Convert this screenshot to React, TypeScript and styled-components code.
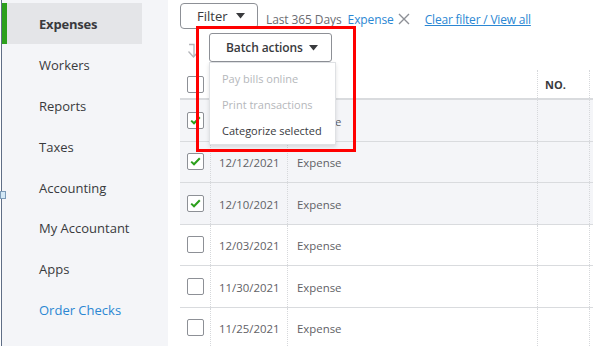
import React from 'react';
import styled, { createGlobalStyle } from 'styled-components';

const GlobalStyle = createGlobalStyle`
  html, body { margin: 0; padding: 0; background: #fff; }
  body { font-family: "Open Sans", "Liberation Sans", sans-serif; color: #393a3d; }
  * { box-sizing: border-box; }
`;

const Page = styled.div`
  position: relative;
  display: flex;
  width: 593px;
  height: 346px;
  overflow: hidden;
  background: #fff;
`;

const Sidebar = styled.nav`
  position: relative;
  flex: none;
  width: 167px;
  margin-left: 1px;
  border-left: 1px solid #5f6e86;
  background: #f4f5f8;
  padding-top: 3px;
  display: flex;
  flex-direction: column;
`;

const EdgeHandle = styled.div`
  position: absolute;
  left: -2px;
  top: 191px;
  width: 6px;
  height: 8px;
  background: #d3e8f6;
  border: 1px solid #7d9bb8;
`;

const NavItem = styled.div<{ $active?: boolean; $link?: boolean }>`
  width: 140px;
  height: 40.8px;
  flex: none;
  display: flex;
  align-items: center;
  padding-left: 32px;
  padding-top: 2px;
  border-left: 5px solid ${p => (p.$active ? '#2ca01c' : 'transparent')};
  background: ${p => (p.$active ? '#e4e5e8' : 'transparent')};
  font-size: 13px;
  font-weight: ${p => (p.$active ? 700 : 400)};
  letter-spacing: ${p => (p.$active ? '-0.2px' : '0')};
  color: ${p => (p.$link ? '#2b87d3' : '#393a3d')};
`;

const Main = styled.main`
  flex: 1;
  display: flex;
  flex-direction: column;
  padding-left: 12px;
`;

const Toolbar = styled.div`
  display: flex;
  align-items: center;
  height: 26px;
  margin-top: 3px;
`;

const FilterButton = styled.div`
  width: 78px;
  height: 26px;
  border: 1px solid #8d9096;
  border-radius: 4px;
  background: #fff;
  display: flex;
  align-items: center;
  padding-left: 16px;
  gap: 8px;
  font-size: 13px;
  color: #393a3d;
`;

const SummaryText = styled.span<{ $blue?: boolean; $gap: number }>`
  margin-left: ${p => p.$gap}px;
  padding-top: 6px;
  font-size: 12px;
  letter-spacing: -0.1px;
  color: ${p => (p.$blue ? '#2b87d3' : '#6b6c72')};
`;

const ClearX = styled.svg`
  margin-left: 4px;
  margin-top: 6px;
  flex: none;
`;

const ClearLink = styled.a`
  margin-left: 15px;
  padding-top: 6px;
  font-size: 12px;
  letter-spacing: -0.2px;
  color: #2b87d3;
  text-decoration: underline;
`;

const BatchRow = styled.div`
  position: relative;
  z-index: 3;
  display: flex;
  align-items: flex-start;
  height: 29px;
  margin-top: 4px;
`;

const SortIcon = styled.svg`
  margin-left: 7px;
  margin-top: 10px;
  flex: none;
`;

const BatchWrap = styled.div`
  position: relative;
  margin-left: 9px;
`;

const BatchButton = styled.div`
  width: 123px;
  height: 29px;
  border: 1px solid #8d9096;
  border-radius: 3px;
  background: #fff;
  display: flex;
  align-items: center;
  padding-left: 16px;
  gap: 6px;
  font-size: 12px;
  font-weight: 600;
  letter-spacing: -0.1px;
  color: #393a3d;
`;

const Menu = styled.div`
  position: absolute;
  top: 29px;
  left: 0;
  width: 127px;
  height: 83px;
  background: #fff;
  border: 1px solid #dfe1e4;
  box-shadow: 0 2px 4px rgba(0, 0, 0, 0.12);
  padding-top: 3px;
`;

const MenuItem = styled.div<{ $disabled?: boolean }>`
  height: 25.8px;
  display: flex;
  align-items: center;
  padding-left: 12px;
  font-size: 11px;
  color: ${p => (p.$disabled ? '#b5b7bb' : '#393a3d')};
  white-space: nowrap;
`;

const Table = styled.div`
  position: relative;
  z-index: 1;
  margin-top: 8px;
  display: flex;
  flex-direction: column;
`;

const Row = styled.div<{ $header?: boolean; $selected?: boolean }>`
  display: grid;
  grid-template-columns: 31px 77px 250px 52px 1fr;
  height: ${p => (p.$header ? '30px' : '41.5px')};
  flex: none;
  border-bottom: ${p => (p.$header ? '2px' : '1px')} solid #d9dbde;
  background: ${p => (p.$selected ? '#f4f5f8' : '#fff')};
`;

const Cell = styled.div<{ $pad?: number; $bold?: boolean }>`
  display: flex;
  align-items: center;
  padding-left: ${p => p.$pad ?? 8}px;
  padding-top: ${p => (p.$bold ? 0 : 2)}px;
  border-right: 1px dotted #d6d8db;
  font-size: ${p => (p.$bold ? '11px' : '11.4px')};
  font-weight: ${p => (p.$bold ? 700 : 400)};
  color: ${p => (p.$bold ? '#393a3d' : '#5f6166')};
  white-space: nowrap;
`;

const Box = styled.div`
  width: 17px;
  height: 17px;
  margin-top: -2px;
  border: 1px solid #8d9096;
  border-radius: 2px;
  background: #fff;
  display: flex;
  align-items: center;
  justify-content: center;
`;

const HeaderBox = styled(Box)`
  margin-top: 0;
`;

const Highlight = styled.div`
  position: absolute;
  left: 196px;
  top: 26px;
  width: 160px;
  height: 126px;
  border: 3px solid #ff0000;
  z-index: 5;
  pointer-events: none;
`;

const Caret = () => (
  <svg width="9" height="6" viewBox="0 0 9 6">
    <path d="M0 0 H9 L4.5 5.5 Z" fill="#393a3d" />
  </svg>
);

const Check = () => (
  <svg width="11" height="9" viewBox="0 0 11 9">
    <path d="M1.2 4.6 L4 7.3 L9.8 1.2" fill="none" stroke="#2ca01c" strokeWidth="2" />
  </svg>
);

const CheckBox = ({ checked }: { checked?: boolean }) => <Box>{checked && <Check />}</Box>;

const navItems = ['Expenses', 'Workers', 'Reports', 'Taxes', 'Accounting', 'My Accountant', 'Apps', 'Order Checks'];

const rows = [
  { date: '12/13/2021', checked: true },
  { date: '12/12/2021', checked: true },
  { date: '12/10/2021', checked: true },
  { date: '12/03/2021', checked: false },
  { date: '11/30/2021', checked: false },
  { date: '11/25/2021', checked: false },
];

export default function App() {
  return (
    <>
      <GlobalStyle />
      <Page>
        <Sidebar>
          <EdgeHandle />
          {navItems.map((n, i) => (
            <NavItem key={n} $active={i === 0} $link={n === 'Order Checks'}>
              {n}
            </NavItem>
          ))}
        </Sidebar>
        <Main>
          <Toolbar>
            <FilterButton>
              Filter <Caret />
            </FilterButton>
            <SummaryText $gap={8}>Last 365 Days</SummaryText>
            <SummaryText $gap={6} $blue>
              Expense
            </SummaryText>
            <ClearX width="12" height="12" viewBox="0 0 12 12">
              <path d="M1 1 L11 11 M11 1 L1 11" stroke="#8d9096" strokeWidth="1.4" />
            </ClearX>
            <ClearLink>Clear filter / View all</ClearLink>
          </Toolbar>
          <BatchRow>
            <SortIcon width="13" height="17" viewBox="0 0 13 17">
              <path d="M2 1.5 H7 V13 M1.5 8.5 L6.5 14 L11.5 8.5" fill="none" stroke="#b4b6ba" strokeWidth="1.3" />
            </SortIcon>
            <BatchWrap>
              <BatchButton>
                Batch actions <Caret />
              </BatchButton>
              <Menu>
                <MenuItem $disabled>Pay bills online</MenuItem>
                <MenuItem $disabled>Print transactions</MenuItem>
                <MenuItem>Categorize selected</MenuItem>
              </Menu>
            </BatchWrap>
          </BatchRow>
          <Table>
            <Row $header>
              <Cell $pad={7} $bold>
                <HeaderBox />
              </Cell>
              <Cell />
              <Cell />
              <Cell $pad={7} $bold>
                NO.
              </Cell>
              <Cell />
            </Row>
            {rows.map(r => (
              <Row key={r.date} $selected={r.checked}>
                <Cell $pad={7}>
                  <CheckBox checked={r.checked} />
                </Cell>
                <Cell>{r.date}</Cell>
                <Cell $pad={9}>Expense</Cell>
                <Cell />
                <Cell />
              </Row>
            ))}
          </Table>
        </Main>
        <Highlight />
      </Page>
    </>
  );
}
